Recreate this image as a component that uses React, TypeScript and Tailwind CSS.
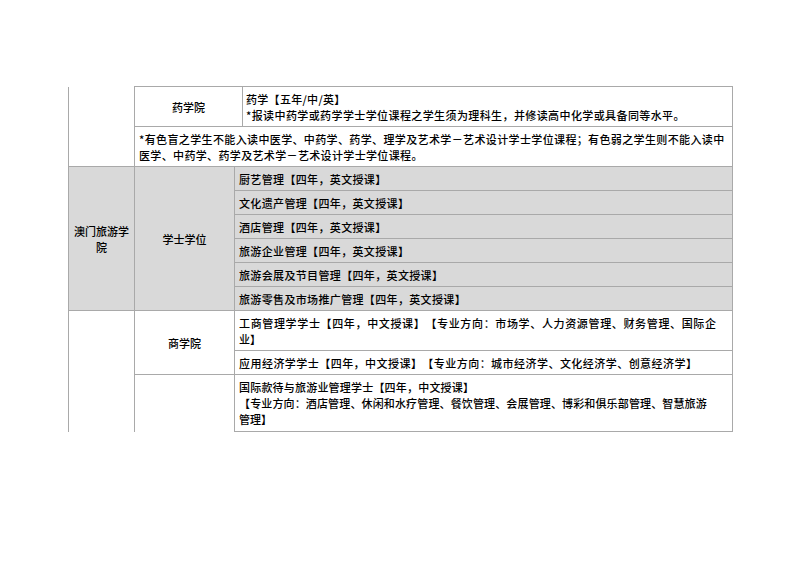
import React from 'react';

const line = 'border border-[#a9a9a9]';
const cell = `${line} px-[4px] py-[3.5px] text-left`;
const head = `${line} px-[4px] py-[3.5px] text-center`;

const travelCourses = [
  '厨艺管理【四年，英文授课】',
  '文化遗产管理【四年，英文授课】',
  '酒店管理【四年，英文授课】',
  '旅游企业管理【四年，英文授课】',
  '旅游会展及节目管理【四年，英文授课】',
  '旅游零售及市场推广管理【四年，英文授课】',
];

export default function App() {
  return (
    <div className="min-h-[566px] w-[800px] bg-white pl-[68px] pt-[86px] text-[11px] font-medium leading-[16px] text-black [font-family:'Noto_Sans_CJK_SC','Noto_Sans',sans-serif] [text-spacing-trim:space-all]">
      <table className="w-[664px] table-fixed border-collapse">
        <colgroup>
          <col className="w-[66px]" />
          <col className="w-[100px]" />
          <col className="w-[8px]" />
          <col className="w-[490px]" />
        </colgroup>
        <tbody>
          {/* 药学院 */}
          <tr className="h-[40px]">
            <td rowSpan={2} className={`${head} border-t-0`} />
            <td colSpan={2} className={head}>药学院</td>
            <td className={`${cell} pl-[3px]`}>
              <span className="tracking-[0.3px]">药学【五年/中/英】</span>
              <br />
              <span className="tracking-[0.4px]">*报读中药学或药学学士学位课程之学生须为理科生，并修读高中化学或具备同等水平。</span>
            </td>
          </tr>
          <tr className="h-[40px]">
            <td colSpan={3} className={cell}>
              <span className="whitespace-nowrap tracking-[0.37px]">*有色盲之学生不能入读中医学、中药学、药学、理学及艺术学－艺术设计学士学位课程；有色弱之学生则不能入读中</span>
              <br />
              <span className="tracking-[0.35px]">医学、中药学、药学及艺术学－艺术设计学士学位课程。</span>
            </td>
          </tr>

          {/* 澳门旅游学院 */}
          {travelCourses.map((c, i) => (
            <tr key={c} className="h-[24px] bg-[#d9d9d9]">
              {i === 0 && (
                <>
                  <td rowSpan={6} className={`${head} px-[5px]`}>澳门旅游学院</td>
                  <td rowSpan={6} className={head}>学士学位</td>
                </>
              )}
              <td colSpan={2} className={`${cell} tracking-[0.35px]`}>{c}</td>
            </tr>
          ))}

          {/* 澳门城市大学 */}
          <tr className="h-[40px]">
            <td rowSpan={3} className={`${head} border-b-0`} />
            <td rowSpan={2} className={head}>商学院</td>
            <td colSpan={2} className={cell}>
              <span className="whitespace-nowrap tracking-[0.65px]">工商管理学学士【四年，中文授课】【专业方向：市场学、人力资源管理、财务管理、国际企</span>
              <br />
              业】
            </td>
          </tr>
          <tr className="h-[24px]">
            <td colSpan={2} className={`${cell} whitespace-nowrap tracking-[0.46px]`}>
              应用经济学学士【四年，中文授课】【专业方向：城市经济学、文化经济学、创意经济学】
            </td>
          </tr>
          <tr className="h-[57px]">
            <td className={`${head} border-b-0`} />
            <td colSpan={2} className={cell}>
              <span className="tracking-[0.2px]">国际款待与旅游业管理学士【四年，中文授课】</span>
              <br />
              <span className="whitespace-nowrap tracking-[0.14px]">【专业方向：酒店管理、休闲和水疗管理、餐饮管理、会展管理、博彩和俱乐部管理、智慧旅游</span>
              <br />
              管理】
            </td>
          </tr>
        </tbody>
      </table>
    </div>
  );
}
